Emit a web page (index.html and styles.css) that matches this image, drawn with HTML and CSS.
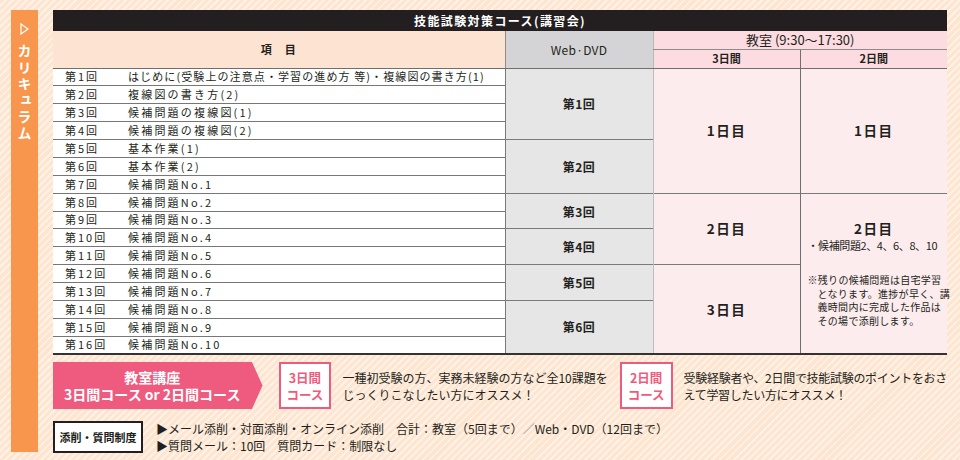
FILE: index.html
```html
<!DOCTYPE html>
<html lang="ja">
<head>
<meta charset="utf-8">
<title>カリキュラム</title>
<link rel="stylesheet" href="styles.css">
</head>
<body>
<div class="page">
  <aside class="sidebar">
    <svg class="side-arrow" width="9" height="12" viewBox="0 0 9 12"><polygon points="1,1 8,6 1,11" fill="none" stroke="#fff" stroke-width="1.2"/></svg>
    <div class="side-label">カリキュラム</div>
  </aside>
  <main class="main">
    <table class="curr">
      <colgroup><col class="c-num"><col class="c-title"><col class="c-web"><col class="c-3"><col class="c-2"></colgroup>
      <thead>
        <tr class="h-title"><th colspan="5">技能試験対策コース(講習会)</th></tr>
        <tr class="h-sub1">
          <th colspan="2" rowspan="2" class="h-item">項　目</th>
          <th rowspan="2" class="h-web">Web·DVD</th>
          <th colspan="2" class="h-room h-room-top">教室 (9:30～17:30)</th>
        </tr>
        <tr class="h-sub2"><th class="h-room h-day3">3日間</th><th class="h-room">2日間</th></tr>
      </thead>
      <tbody>
        <tr><td class="num">第1回</td><td class="ttl ttl-long">はじめに(受験上の注意点・学習の進め方 等)・複線図の書き方(1)</td><td rowspan="4" class="web">第1回</td><td rowspan="7" class="day d3">1日目</td><td rowspan="7" class="day d2">1日目</td></tr>
        <tr><td class="num">第2回</td><td class="ttl">複線図の書き方(2)</td></tr>
        <tr><td class="num">第3回</td><td class="ttl">候補問題の複線図(1)</td></tr>
        <tr><td class="num">第4回</td><td class="ttl">候補問題の複線図(2)</td></tr>
        <tr><td class="num">第5回</td><td class="ttl">基本作業(1)</td><td rowspan="3" class="web">第2回</td></tr>
        <tr><td class="num">第6回</td><td class="ttl">基本作業(2)</td></tr>
        <tr><td class="num">第7回</td><td class="ttl">候補問題No.1</td></tr>
        <tr><td class="num">第8回</td><td class="ttl">候補問題No.2</td><td rowspan="2" class="web">第3回</td><td rowspan="4" class="day d3">2日目</td>
          <td rowspan="9" class="day d2 d2-notes">
            <div class="day-big">2日目</div>
            <div class="day-sub">・候補問題2、4、6、8、10</div>
            <p class="note">※残りの候補問題は自宅学習<br>となります。進捗が早く、講<br>義時間内に完成した作品は<br>その場で添削します。</p>
          </td></tr>
        <tr><td class="num">第9回</td><td class="ttl">候補問題No.3</td></tr>
        <tr><td class="num">第10回</td><td class="ttl">候補問題No.4</td><td rowspan="2" class="web">第4回</td></tr>
        <tr><td class="num">第11回</td><td class="ttl">候補問題No.5</td></tr>
        <tr><td class="num">第12回</td><td class="ttl">候補問題No.6</td><td rowspan="2" class="web">第5回</td><td rowspan="5" class="day d3">3日目</td></tr>
        <tr><td class="num">第13回</td><td class="ttl">候補問題No.7</td></tr>
        <tr><td class="num">第14回</td><td class="ttl">候補問題No.8</td><td rowspan="3" class="web">第6回</td></tr>
        <tr><td class="num">第15回</td><td class="ttl">候補問題No.9</td></tr>
        <tr><td class="num">第16回</td><td class="ttl">候補問題No.10</td></tr>
      </tbody>
    </table>

    <div class="courses">
      <div class="banner"><div class="banner-text"><div class="bline">教室講座</div><div class="bline">3日間コース or 2日間コース</div></div></div>
      <div class="cbox"><div class="cline">3日間</div><div class="cline">コース</div></div>
      <div class="ctext ctext-1">一種初受験の方、実務未経験の方など全10課題を<br>じっくりこなしたい方にオススメ！</div>
      <div class="cbox"><div class="cline">2日間</div><div class="cline">コース</div></div>
      <div class="ctext ctext-2">受験経験者や、2日間で技能試験のポイントをおさ<br>えて学習したい方にオススメ！</div>
    </div>

    <div class="support">
      <div class="sbox">添削・質問制度</div>
      <div class="stext">▶メール添削・対面添削・オンライン添削　合計：教室（5回まで）<span class="slash">／</span>Web・DVD（12回まで）<br>▶質問メール：10回　質問カード：制限なし</div>
    </div>
  </main>
</div>
</body>
</html>
```
FILE: styles.css
```css
html, body {
  margin: 0;
  padding: 0;
}
body {
  width: 960px;
  height: 460px;
  overflow: hidden;
  background: repeating-linear-gradient(135deg, #fde5d0 0 3px, #fff1e5 3px 5px);
  font-family: "Noto Sans CJK JP", "Noto Sans", sans-serif;
  color: #231f20;
}
.page {
  display: flex;
  padding: 10px 0 0 11px;
  gap: 15px;
}
.sidebar {
  width: 27px;
  height: 442px;
  background: #f7964c;
  display: flex;
  flex-direction: column;
  align-items: center;
  padding-top: 13px;
  box-sizing: border-box;
}
.side-arrow {
  display: block;
}
.side-label {
  writing-mode: vertical-rl;
  font-weight: 700;
  font-size: 14px;
  line-height: 1;
  color: #fff;
  letter-spacing: 2.3px;
  margin-top: 9px;
}
.main {
  width: 894px;
  display: flex;
  flex-direction: column;
}

/* table */
.curr {
  width: 894px;
  border-collapse: collapse;
  table-layout: fixed;
  border-bottom: 2px solid #333;
}
.c-num { width: 75px; }
.c-title { width: 377px; }
.c-web { width: 148px; }
.c-3 { width: 147px; }
.c-2 { width: 147px; }
.curr th, .curr td {
  padding: 0;
  line-height: 15px;
}
.h-title {
  height: 21px;
}
.h-title th {
  background: #231f20;
  color: #fff;
  font-size: 12px;
  font-weight: 700;
  letter-spacing: 1.4px;
  text-align: center;
}
.h-sub1 { height: 18px; }
.h-sub2 { height: 19px; }
.h-item {
  background: #fde4d2;
  font-size: 11px;
  font-weight: 700;
  letter-spacing: 1px;
  border-bottom: 1px solid #6f6f6f;
}
.h-web {
  background: #d4d4d6;
  font-size: 12px;
  font-weight: 400;
  letter-spacing: 0.3px;
  border-left: 1px solid #8c8c8c;
  border-bottom: 1px solid #6f6f6f;
}
.h-room {
  background: #fcdce0;
  font-size: 11px;
  font-weight: 700;
  border-left: 1px solid #b8b8b8;
}
.h-room-top {
  font-size: 13px;
  font-weight: 400;
  border-bottom: 1px solid #8c8c8c;
}
.h-sub2 .h-room {
  border-bottom: 1px solid #6f6f6f;
}
.h-sub2 .h-room + .h-room {
  border-left: 1px solid #6f6f6f;
}
.curr tbody tr {
  height: 17.875px;
}
.num {
  background: #fff;
  font-size: 11px;
  letter-spacing: 2px;
  padding-left: 12px !important;
  border-top: 1px solid #777;
  white-space: nowrap;
}
.ttl {
  background: #fff;
  font-size: 11px;
  letter-spacing: 2.2px;
  border-top: 1px solid #777;
  white-space: nowrap;
}
.ttl-long {
  letter-spacing: 1.1px;
}
.curr tbody tr:first-child .num,
.curr tbody tr:first-child .ttl {
  border-top: none;
}
.web {
  background: #e6e6e6;
  text-align: center;
  font-size: 12px;
  font-weight: 700;
  letter-spacing: 0.5px;
  border-left: 1px solid #7a7a7a;
  border-top: 1px solid #7a7a7a;
}
.day {
  background: #fdecee;
  text-align: center;
  font-size: 13.5px;
  font-weight: 700;
  letter-spacing: 1.5px;
  border-top: 1px solid #7a7a7a;
}
.d3 {
  border-left: 1px solid #bdbdbd;
}
.d2 {
  border-left: 1px solid #6f6f6f;
}
.d2-notes {
  vertical-align: middle;
  padding: 0 0 0 7px !important;
}
.day-big {
  line-height: 18px;
  padding-right: 7px;
}
.day-sub {
  font-size: 11px;
  font-weight: 400;
  letter-spacing: -0.4px;
  line-height: 16px;
  text-align: left;
  white-space: nowrap;
}
.note {
  margin: 20px 0 0;
  font-size: 10px;
  font-weight: 400;
  letter-spacing: 0.3px;
  line-height: 13.5px;
  text-align: left;
  padding-left: 10px;
  text-indent: -10px;
  white-space: nowrap;
}

/* course row */
.courses {
  display: flex;
  align-items: stretch;
  margin-top: 7px;
  height: 47px;
}
.banner {
  width: 210px;
  height: 47px;
  background: #ef5b7e;
  clip-path: polygon(0 0, 199px 0, 100% 50%, 199px 100%, 0 100%);
  color: #fff;
  font-weight: 700;
  font-size: 14px;
  display: flex;
  align-items: center;
  justify-content: center;
  padding-right: 11px;
  box-sizing: border-box;
  margin-right: 16px;
  text-align: center;
}
.bline {
  height: 17px;
  line-height: 17px;
  white-space: nowrap;
}
.cbox {
  width: 53px;
  box-sizing: border-box;
  border: 2px solid #ef5b7e;
  background: #fff;
  color: #ef5b7e;
  font-weight: 700;
  font-size: 12.5px;
  display: flex;
  flex-direction: column;
  align-items: center;
  justify-content: center;
  text-align: center;
}
.cline {
  height: 17px;
  line-height: 17px;
}
.ctext {
  font-size: 12px;
  line-height: 17px;
  display: flex;
  align-items: center;
  white-space: nowrap;
  margin-left: 11px;
}
.ctext-1 {
  width: 267px;
  margin-right: 11px;
}
.ctext-2 {
  letter-spacing: -0.3px;
}

/* support row */
.support {
  display: flex;
  align-items: center;
  margin-top: 11px;
}
.sbox {
  width: 90px;
  height: 32px;
  box-sizing: border-box;
  border: 2px solid #231f20;
  background: #fff;
  font-size: 11px;
  font-weight: 700;
  display: flex;
  align-items: center;
  justify-content: center;
}
.stext {
  margin-left: 13px;
  font-size: 12px;
  line-height: 17px;
  white-space: nowrap;
}
.slash {
  color: #999;
}
```
